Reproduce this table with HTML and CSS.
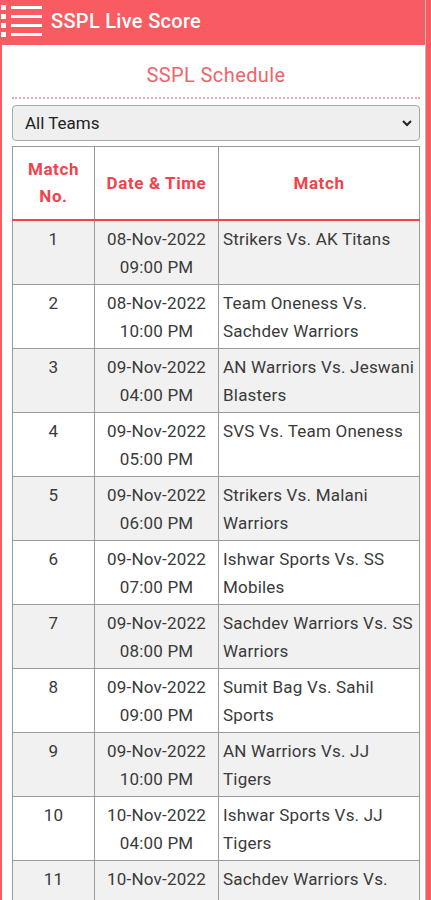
FILE: index.html
```html
<!DOCTYPE html>
<html>
<head>
<meta charset="utf-8">
<link rel="stylesheet" href="styles.css">
</head>
<body>
<div class="app">
  <header class="topbar">
    <svg class="menu" width="42" height="42" viewBox="0 0 42 42">
      <g fill="#fff">
        <rect x="1" y="4" width="5" height="5"/>
        <rect x="1" y="13" width="5" height="5"/>
        <rect x="1" y="22" width="5" height="5"/>
        <rect x="1" y="31" width="5" height="5"/>
        <rect x="11" y="5" width="31" height="3"/>
        <rect x="11" y="14" width="31" height="3"/>
        <rect x="11" y="23" width="31" height="3"/>
        <rect x="11" y="32" width="31" height="3"/>
      </g>
    </svg>
    <span class="brand">SSPL Live Score</span>
  </header>
  <main class="content">
    <h1 class="title">SSPL Schedule</h1>
    <div class="select">
      <span>All Teams</span>
      <svg width="12" height="8" viewBox="0 0 12 8"><path d="M2 2 L6 6 L10 2" fill="none" stroke="#222" stroke-width="2"/></svg>
    </div>
    <table class="sched">
      <thead>
        <tr><th class="c1">Match<br>No.</th><th class="c2">Date &amp; Time</th><th class="c3">Match</th></tr>
      </thead>
      <tbody>
        <tr><td class="num">1</td><td class="dt">08-Nov-2022<br>09:00 PM</td><td>Strikers Vs. AK Titans</td></tr>
        <tr><td class="num">2</td><td class="dt">08-Nov-2022<br>10:00 PM</td><td>Team Oneness Vs. Sachdev Warriors</td></tr>
        <tr><td class="num">3</td><td class="dt">09-Nov-2022<br>04:00 PM</td><td>AN Warriors Vs. Jeswani Blasters</td></tr>
        <tr><td class="num">4</td><td class="dt">09-Nov-2022<br>05:00 PM</td><td>SVS Vs. Team Oneness</td></tr>
        <tr><td class="num">5</td><td class="dt">09-Nov-2022<br>06:00 PM</td><td>Strikers Vs. Malani Warriors</td></tr>
        <tr><td class="num">6</td><td class="dt">09-Nov-2022<br>07:00 PM</td><td>Ishwar Sports Vs. SS Mobiles</td></tr>
        <tr><td class="num">7</td><td class="dt">09-Nov-2022<br>08:00 PM</td><td>Sachdev Warriors Vs. SS Warriors</td></tr>
        <tr><td class="num">8</td><td class="dt">09-Nov-2022<br>09:00 PM</td><td>Sumit Bag Vs. Sahil Sports</td></tr>
        <tr><td class="num">9</td><td class="dt">09-Nov-2022<br>10:00 PM</td><td>AN Warriors Vs. JJ Tigers</td></tr>
        <tr><td class="num">10</td><td class="dt">10-Nov-2022<br>04:00 PM</td><td>Ishwar Sports Vs. JJ Tigers</td></tr>
        <tr><td class="num">11</td><td class="dt">10-Nov-2022<br>05:00 PM</td><td>Sachdev Warriors Vs. Strikers</td></tr>
      </tbody>
    </table>
  </main>
</div>
</body>
</html>
```
FILE: styles.css
```css
html, body {
  margin: 0;
  padding: 0;
  height: 900px;
  overflow: hidden;
}
body {
  background: #f95b62;
  font-family: Roboto, "Liberation Sans", sans-serif;
}
.app {
  width: 425px;
  height: 900px;
  border-right: 1px solid #b8b8b8;
  background: #f95b62;
}
.topbar {
  height: 45px;
  display: flex;
  align-items: center;
  background: #f95b62;
}
.menu {
  flex: none;
  margin-top: -1px;
}
.brand {
  color: #fff;
  font-size: 20px;
  font-weight: 500;
  letter-spacing: 0.3px;
  margin-left: 9px;
  margin-top: -3px;
}
.content {
  background: #fff;
  margin-left: 2px;
  padding: 0 5px 0 10px;
  height: 855px;
  overflow: hidden;
}
.title {
  margin: 0;
  padding: 17px 0 0;
  height: 35px;
  text-align: center;
  font-size: 20px;
  font-weight: 400;
  letter-spacing: 0.4px;
  color: #f0646b;
  border-bottom: 2px dotted #f3a5aa;
  box-sizing: content-box;
  line-height: 26px;
}
.select {
  margin-top: 6px;
  height: 34px;
  background: #efefef;
  border: 1px solid #a9a9a9;
  border-radius: 4px;
  display: flex;
  align-items: center;
  justify-content: space-between;
  padding: 0 6px 0 12px;
  font-size: 17px;
  color: #222;
}
.sched {
  margin-top: 5px;
  width: 408px;
  border-collapse: collapse;
  font-size: 17px;
  letter-spacing: 0.2px;
  color: #3a3a3a;
}
.sched th, .sched td {
  border: 1px solid #9a9a9a;
}
.sched th {
  color: #f3424b;
  font-weight: 700;
  font-size: 17px;
  letter-spacing: 0.6px;
  line-height: 27px;
  height: 72px;
  padding: 0 4px;
  border-bottom: 2px solid #f3424b;
}
.c1 { width: 73px; }
.c2 { width: 115px; }
.sched td {
  vertical-align: top;
  line-height: 28px;
  padding: 4px 4px 3px 4px;
  height: 56px;
}
.sched td.num, .sched td.dt {
  text-align: center;
}
.sched tbody tr:nth-child(odd) {
  background: #f1f1f1;
}
```
